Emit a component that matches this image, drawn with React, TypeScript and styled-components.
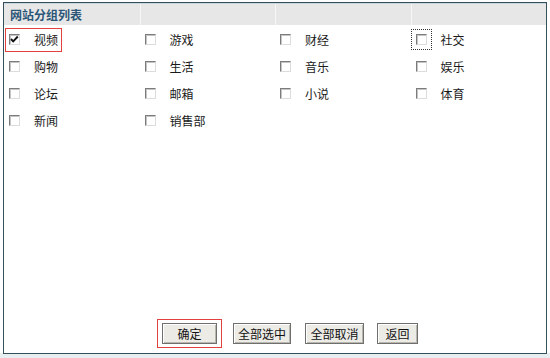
import * as React from 'react';
import styled, { createGlobalStyle } from 'styled-components';

const GlobalStyle = createGlobalStyle`
    html, body {
        margin: 0;
        padding: 0;
        background: #ffffff;
    }
    body {
        font-family: "Noto Sans CJK SC", "Liberation Sans", sans-serif;
        font-size: 12px;
        color: #111;
    }
`;

const Page = styled.div`
    width: 550px;
    height: 358px;
    padding: 2px 3px 0 3px;
    box-sizing: border-box;
    background: linear-gradient(to bottom, #ffffff 353px, #e8eef0 353px);
`;

const Panel = styled.div`
    height: 352px;
    box-sizing: border-box;
    border: 1px solid #34505c;
    display: flex;
    flex-direction: column;
    background: #ffffff;
`;

const Header = styled.div`
    display: grid;
    grid-template-columns: repeat(4, 1fr);
    height: 21px;
    background: #e7e7e7;
    border-top: 1px solid #c9d6de;
`;

const HeaderCell = styled.div<{ $first?: boolean }>`
    display: flex;
    align-items: center;
    padding-left: 6px;
    border-left: ${(p) => (p.$first ? 'none' : '1px solid #f6f6f6')};
    color: #2c5677;
    font-weight: bold;
    font-size: 12px;
`;

const Grid = styled.div`
    display: grid;
    grid-template-columns: repeat(4, 1fr);
    grid-auto-rows: 27px;
    padding-top: 1px;
`;

const Item = styled.label`
    display: flex;
    align-items: center;
    padding-left: 5px;
`;

const Mark = styled.span<{ $outlined?: boolean }>`
    display: inline-flex;
    align-items: center;
    padding: ${(p) => (p.$outlined ? '0 4px' : '0')};
    height: ${(p) => (p.$outlined ? '24px' : 'auto')};
    margin-left: ${(p) => (p.$outlined ? '-4px' : '0')};
    box-shadow: ${(p) => (p.$outlined ? 'inset 0 0 0 1px #e3413f' : 'none')};
    box-sizing: border-box;
`;

const Focus = styled.span`
    display: inline-flex;
    align-items: center;
    justify-content: center;
    width: 21px;
    height: 21px;
    margin-left: -5px;
    margin-right: -5px;
    outline: 1px dotted #333;
    outline-offset: -1px;
`;

const Box = styled.span`
    width: 11px;
    height: 11px;
    box-sizing: border-box;
    border-style: solid;
    border-width: 1px;
    border-color: #7c7c7c #dcdcdc #dcdcdc #7c7c7c;
    box-shadow: inset 1px 1px 0 #c4c4c4;
    background: #ffffff;
    display: inline-flex;
    align-items: center;
    justify-content: center;
`;

const Label = styled.span`
    margin-left: 14px;
    font-size: 12px;
    color: #1a1a1a;
`;

const Spacer = styled.div`
    flex: 1;
`;

const Actions = styled.div`
    display: flex;
    align-items: center;
    padding: 0 0 5px 153px;
`;

const Highlight = styled.span`
    display: inline-flex;
    padding: 4px 5px;
    box-shadow: inset 0 0 0 1px #e3413f;
    margin-right: 11px;
`;

const Button = styled.button<{ $w: number; $gap?: number }>`
    width: ${(p) => p.$w}px;
    height: 21px;
    margin-right: ${(p) => p.$gap ?? 0}px;
    padding: 0;
    font-family: "Noto Sans CJK SC", "Liberation Sans", sans-serif;
    font-size: 12px;
    color: #111;
    background: #ecebe6;
    border: 1px solid #6f6f6f;
    box-shadow: inset 1px 1px 0 #ffffff, inset -1px -1px 0 #b9b7ae;
    display: flex;
    align-items: center;
    justify-content: center;
`;

type Group = { name: string; checked?: boolean; outlined?: boolean; focused?: boolean };

const groups: Group[] = [
    { name: '视频', checked: true, outlined: true },
    { name: '游戏' },
    { name: '财经' },
    { name: '社交', focused: true },
    { name: '购物' },
    { name: '生活' },
    { name: '音乐' },
    { name: '娱乐' },
    { name: '论坛' },
    { name: '邮箱' },
    { name: '小说' },
    { name: '体育' },
    { name: '新闻' },
    { name: '销售部' },
];

const Check = () => (
    <svg width="9" height="9" viewBox="0 0 9 9">
        <path d="M1 4 L3.2 6.3 L7.8 1.5" stroke="#111" strokeWidth="1.9" fill="none" />
    </svg>
);

const GroupItem: React.FunctionComponent<{ data: Group }> = ({ data }) => {
    const box = <Box>{data.checked && <Check />}</Box>;
    return (
        <Item>
            <Mark $outlined={data.outlined}>
                {data.focused ? <Focus>{box}</Focus> : box}
                <Label>{data.name}</Label>
            </Mark>
        </Item>
    );
};

export default function App() {
    return (
        <Page>
            <GlobalStyle />
            <Panel>
                <Header>
                    <HeaderCell $first>网站分组列表</HeaderCell>
                    <HeaderCell />
                    <HeaderCell />
                    <HeaderCell />
                </Header>
                <Grid>
                    {groups.map((g) => (
                        <GroupItem key={g.name} data={g} />
                    ))}
                </Grid>
                <Spacer />
                <Actions>
                    <Highlight>
                        <Button $w={55}>确定</Button>
                    </Highlight>
                    <Button $w={58} $gap={14}>全部选中</Button>
                    <Button $w={59} $gap={13}>全部取消</Button>
                    <Button $w={41}>返回</Button>
                </Actions>
            </Panel>
        </Page>
    );
}
